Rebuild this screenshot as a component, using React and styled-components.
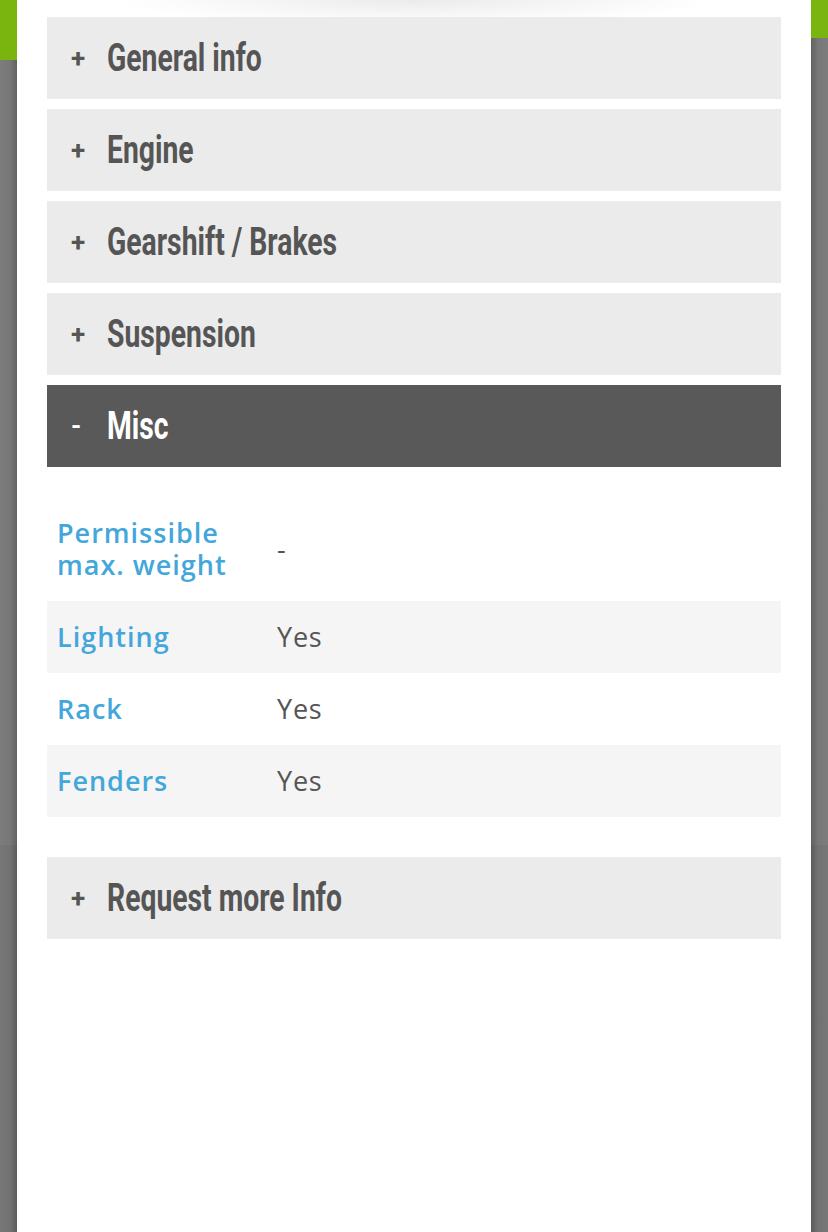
import React from 'react';
import styled, { createGlobalStyle } from 'styled-components';

const GlobalStyle = createGlobalStyle`
  html, body {
    margin: 0;
    padding: 0;
    background: #6e6e6e;
  }
  * { box-sizing: border-box; }
`;

const Page = styled.div`
  display: grid;
  grid-template-columns: 17px 1fr 17px;
  width: 828px;
  height: 1232px;
  overflow: hidden;
`;

const Side = styled.div`
  display: flex;
  flex-direction: column;
  background: ${p => p.$left
    ? 'linear-gradient(90deg, #777 0%, #727272 60%, #5c5c5c 100%)'
    : 'linear-gradient(90deg, #5c5c5c 0%, #727272 40%, #777 100%)'};
`;

const GreenBar = styled.div`
  height: ${p => p.$h}px;
  background: #7ab40f;
`;

const SideUpper = styled.div`
  height: ${p => p.$h}px;
  background: rgba(255, 255, 255, 0.04);
`;

const Panel = styled.div`
  background: #fff;
  padding: 17px 30px 0;
  display: flex;
  flex-direction: column;
  background-image: radial-gradient(ellipse 300px 24px at 50% 0, rgba(0,0,0,0.08), rgba(0,0,0,0));
  background-repeat: no-repeat;
`;

const Accordion = styled.div`
  display: flex;
  flex-direction: column;
  gap: 10px;
`;

const Header = styled.div`
  height: 82px;
  display: flex;
  align-items: center;
  padding-left: 24px;
  background: ${p => p.$open ? '#595959' : '#ebebeb'};
  color: ${p => p.$open ? '#fff' : '#555'};
  font-family: Roboto, "Liberation Sans", sans-serif;
  font-weight: 700;
`;

const Sign = styled.span`
  width: 36px;
  font-size: 26px;
  display: inline-block;
`;

// condensed display face is not installed, so narrow Roboto Bold
const Title = styled.span`
  display: inline-block;
  font-size: 38px;
  transform: scaleX(0.745);
  transform-origin: left center;
  white-space: nowrap;
`;

const Table = styled.div`
  display: flex;
  flex-direction: column;
  margin-top: 30px;
  margin-bottom: 40px;
`;

const Row = styled.div`
  display: flex;
  align-items: center;
  min-height: ${p => p.$tall ? 104 : 72}px;
  padding-left: 10px;
  background: ${p => p.$shade ? '#f5f5f5' : '#fff'};
  font-family: "Open Sans", "Lato", sans-serif;
  font-size: 27px;
  line-height: 32px;
`;

const Label = styled.div`
  width: 220px;
  color: #43a7db;
  font-weight: 600;
  letter-spacing: 1px;
`;

const Value = styled.div`
  color: #555;
  letter-spacing: 0.8px;
`;

const sections = ['General info', 'Engine', 'Gearshift / Brakes', 'Suspension'];

const specs = [
  { label: 'Permissible max. weight', value: '-', tall: true },
  { label: 'Lighting', value: 'Yes' },
  { label: 'Rack', value: 'Yes' },
  { label: 'Fenders', value: 'Yes' },
];

export default function App() {
  return (
    <>
      <GlobalStyle />
      <Page>
        <Side $left>
          <GreenBar $h={60} />
          <SideUpper $h={785} />
        </Side>
        <Panel>
          <Accordion>
            {sections.map(s => (
              <Header key={s}><Sign>+</Sign><Title>{s}</Title></Header>
            ))}
            <Header $open><Sign>-</Sign><Title>Misc</Title></Header>
          </Accordion>
          <Table>
            {specs.map((r, i) => (
              <Row key={r.label} $tall={r.tall} $shade={i % 2 === 1}>
                <Label>{r.tall ? <>Permissible<br />max. weight</> : r.label}</Label>
                <Value>{r.value}</Value>
              </Row>
            ))}
          </Table>
          <Header><Sign>+</Sign><Title>Request more Info</Title></Header>
        </Panel>
        <Side>
          <GreenBar $h={38} />
          <SideUpper $h={807} />
        </Side>
      </Page>
    </>
  );
}
